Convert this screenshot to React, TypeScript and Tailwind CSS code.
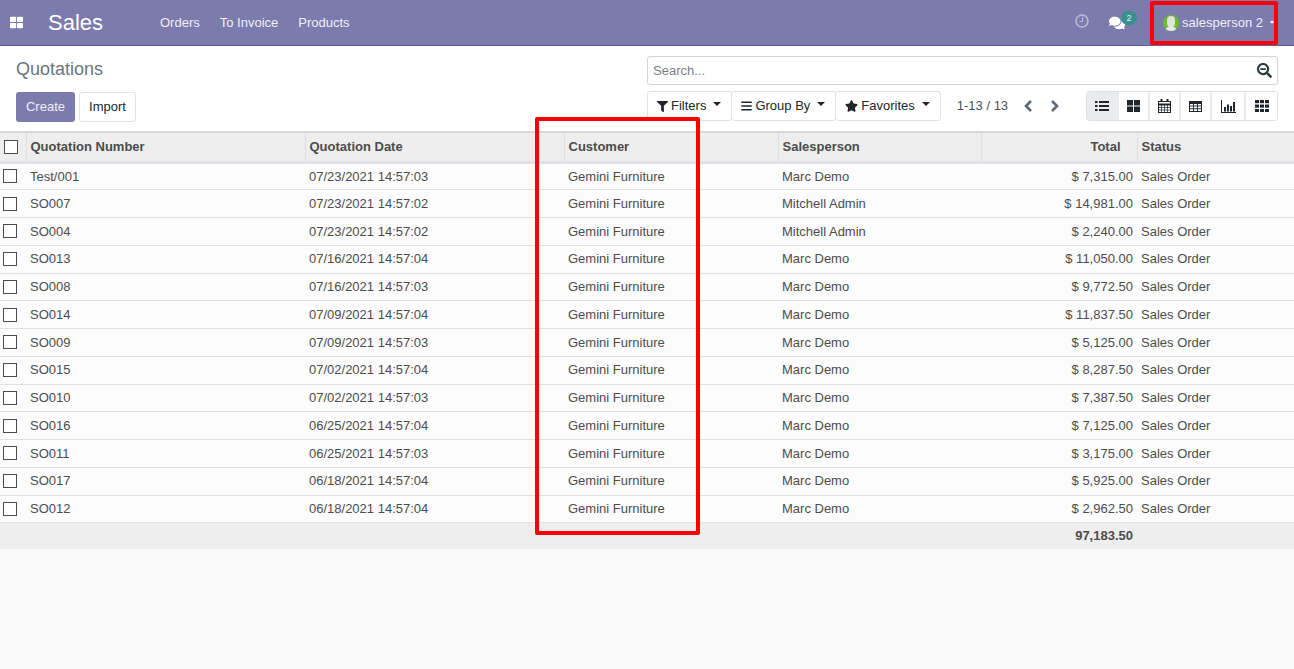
import { FaBars, FaComments, FaFilter, FaSearchMinus, FaStar, FaThLarge } from "react-icons/fa"

const rows = [
  ["Test/001", "07/23/2021 14:57:03", "Marc Demo", "$ 7,315.00"],
  ["SO007", "07/23/2021 14:57:02", "Mitchell Admin", "$ 14,981.00"],
  ["SO004", "07/23/2021 14:57:02", "Mitchell Admin", "$ 2,240.00"],
  ["SO013", "07/16/2021 14:57:04", "Marc Demo", "$ 11,050.00"],
  ["SO008", "07/16/2021 14:57:03", "Marc Demo", "$ 9,772.50"],
  ["SO014", "07/09/2021 14:57:04", "Marc Demo", "$ 11,837.50"],
  ["SO009", "07/09/2021 14:57:03", "Marc Demo", "$ 5,125.00"],
  ["SO015", "07/02/2021 14:57:04", "Marc Demo", "$ 8,287.50"],
  ["SO010", "07/02/2021 14:57:03", "Marc Demo", "$ 7,387.50"],
  ["SO016", "06/25/2021 14:57:04", "Marc Demo", "$ 7,125.00"],
  ["SO011", "06/25/2021 14:57:03", "Marc Demo", "$ 3,175.00"],
  ["SO017", "06/18/2021 14:57:04", "Marc Demo", "$ 5,925.00"],
  ["SO012", "06/18/2021 14:57:04", "Marc Demo", "$ 2,962.50"],
]

function Check() {
  return <span className="block w-[14px] h-[14px] border border-[#4c4c4c] bg-white" />
}

function Caret() {
  return <span className="inline-block ml-[4px] mb-[4px] w-0 h-0 border-x-[4px] border-x-transparent border-t-[4px] border-t-[#212529]" />
}

function FilterButton({ icon, label, last }: { icon: React.ReactNode; label: string; last?: boolean }) {
  return (
    <button className={"h-[30px] pl-[9px] pr-[10px] flex items-center gap-[3px] bg-white border border-[#dee2e6] rounded-[3px] text-[13px] text-[#212529] " + (last ? "" : "-mr-px")}>
      {icon}
      {label}
      <Caret />
    </button>
  )
}

function ViewButton({ children, active, w }: { children: React.ReactNode; active?: boolean; w: string }) {
  return (
    <button className={w + " h-[28px] flex items-center justify-center border-r-2 border-[#e9ecef] last:border-r-0 text-[#212529] " + (active ? "bg-[#e9ecef]" : "bg-white")}>
      {children}
    </button>
  )
}

function ListIcon() {
  return (
    <svg width="14" height="12" viewBox="0 0 14 12" fill="currentColor">
      <rect x="0" y="1" width="2.5" height="2" />
      <rect x="4" y="1" width="10" height="2" />
      <rect x="0" y="5" width="2.5" height="2" />
      <rect x="4" y="5" width="10" height="2" />
      <rect x="0" y="9" width="2.5" height="2" />
      <rect x="4" y="9" width="10" height="2" />
    </svg>
  )
}

function KanbanIcon() {
  return (
    <svg width="13" height="12" viewBox="0 0 13 12" fill="currentColor">
      <rect x="0" y="0" width="6" height="5.5" />
      <rect x="7" y="0" width="6" height="5.5" />
      <rect x="0" y="6.5" width="6" height="5.5" />
      <rect x="7" y="6.5" width="6" height="5.5" />
    </svg>
  )
}

function CalendarIcon() {
  return (
    <svg width="13" height="14" viewBox="0 0 13 14" fill="none" stroke="currentColor">
      <rect x="0.5" y="2.5" width="12" height="11" />
      <path d="M0 5.5h13" strokeWidth="2" />
      <path d="M0.5 8.5h12M0.5 11h12M3.5 5v8.5M6.5 5v8.5M9.5 5v8.5" strokeWidth="0.7" />
      <path d="M3.5 0v3M9.5 0v3" strokeWidth="2" />
    </svg>
  )
}

function TableIcon() {
  return (
    <svg width="13" height="11" viewBox="0 0 13 11" fill="none" stroke="currentColor">
      <rect x="0.5" y="0.5" width="12" height="10" />
      <path d="M0 2h13" strokeWidth="2" />
      <path d="M0.5 5h12M0.5 7.7h12M4.5 2v8.5M8.5 2v8.5" strokeWidth="0.9" />
    </svg>
  )
}

function GraphIcon() {
  return (
    <svg width="15" height="13" viewBox="0 0 15 13" fill="currentColor">
      <path d="M0 0h1v12h15v1H0z" />
      <rect x="3" y="7" width="2" height="4.5" />
      <rect x="6" y="4.5" width="2" height="7" />
      <rect x="9" y="6" width="2" height="5.5" />
      <rect x="12" y="2" width="2" height="9.5" />
    </svg>
  )
}

function PivotIcon() {
  return (
    <svg width="14" height="12" viewBox="0 0 14 12" fill="currentColor">
      {[0, 4.5, 9].map((y) =>
        [0, 5, 10].map((x) => <rect key={x + "-" + y} x={x} y={y} width="4" height="3.2" />),
      )}
    </svg>
  )
}

function Chevron({ left }: { left?: boolean }) {
  return (
    <svg width="10" height="12" viewBox="0 0 10 12" fill="none" stroke="#5f6a75" strokeWidth="2.6">
      <path d={left ? "M8 1 3 6l5 5" : "M2 1l5 5-5 5"} />
    </svg>
  )
}

function ClockIcon() {
  return (
    <svg width="14" height="14" viewBox="0 0 14 14" fill="none" stroke="#bcbbd6">
      <circle cx="7" cy="7" r="6" strokeWidth="1.6" />
      <path d="M7.5 3v4.5H4.5" strokeWidth="1.1" />
    </svg>
  )
}

export default function App() {
  return (
    <div className="relative min-h-[669px] bg-[#f9f9f9] font-['Liberation_Sans',Arial,sans-serif] text-[13px] text-[#4c4c4c] overflow-hidden">
      {/* Navbar */}
      <header className="h-[46px] bg-[#7c7bad] border-b border-[#5f5e97] flex items-center text-white">
        <FaThLarge className="ml-[10px] w-[13px] h-[13px] -mt-px" />
        <span className="ml-[25px] text-[22px] w-[112px]">Sales</span>
        <nav className="flex gap-[20px] text-[13px] text-[#f0f0f6]">
          <span>Orders</span>
          <span>To Invoice</span>
          <span>Products</span>
        </nav>
        <div className="ml-auto flex items-center">
          <span className="-mt-[3px]"><ClockIcon /></span>
          <div className="relative ml-[20px] mr-[26px] w-[28px]">
            <FaComments className="w-[16px] h-[16px]" />
            <span className="absolute left-[12px] -top-[4px] w-[16px] h-[14px] rounded-full bg-[#39908f] text-[9px] leading-[14px] text-center text-[#e6f2f2]">2</span>
          </div>
          <div className="w-[16px] h-[16px] rounded-full bg-[#6cbb2c] overflow-hidden relative mr-[3px]">
            <span className="absolute left-[4px] top-[1px] w-[8px] h-[11px] rounded-full bg-[#dfe3dc]" />
            <span className="absolute left-[2px] top-[11px] w-[12px] h-[6px] rounded-t-full bg-[#e8ebe5]" />
          </div>
          <span className="text-[#f0f0f6]">salesperson 2</span>
          <span className="ml-[7px] mr-[20px] w-0 h-0 border-x-[2.5px] border-x-transparent border-t-[3px] border-t-white" />
        </div>
      </header>

      {/* Control panel */}
      <section className="h-[85px] bg-white flex justify-between pl-[16px] pr-[16px]">
        <div>
          <h2 className="mt-[13px] text-[18px] leading-[21px] text-[#6c757d]">Quotations</h2>
          <div className="mt-[12px] flex gap-[4px]">
            <button className="w-[59px] h-[30px] rounded-[3px] bg-[#7c7bad] text-[#f0f0f6] text-[13px]">Create</button>
            <button className="w-[57px] h-[30px] rounded-[3px] bg-white border border-[#dee2e6] text-[#212529] text-[13px]">Import</button>
          </div>
        </div>
        <div className="w-[631px] pt-[10px]">
          <div className="h-[29px] border border-[#ced4da] rounded-[3px] flex items-center justify-between pl-[5px] pr-[5px] text-[#7a7f84]">
            <span>Search...</span>
            <FaSearchMinus className="w-[15px] h-[15px] text-[#2f3b3b]" />
          </div>
          <div className="mt-[6px] flex items-center">
            <FilterButton icon={<FaFilter className="w-[11px] h-[11px]" />} label="Filters" />
            <FilterButton icon={<FaBars className="w-[11px] h-[12px]" />} label="Group By" />
            <FilterButton icon={<FaStar className="w-[13px] h-[12px]" />} label="Favorites" last />
            <span className="ml-[16px] text-[#495057]">1-13 / 13</span>
            <span className="ml-[15px]"><Chevron left /></span>
            <span className="ml-[17px]"><Chevron /></span>
            <div className="ml-auto flex border border-[#dee2e6] rounded-[3px] overflow-hidden">
              <ViewButton active w="w-[32px]"><ListIcon /></ViewButton>
              <ViewButton w="w-[31px]"><KanbanIcon /></ViewButton>
              <ViewButton w="w-[31px]"><CalendarIcon /></ViewButton>
              <ViewButton w="w-[31px]"><TableIcon /></ViewButton>
              <ViewButton w="w-[34px]"><GraphIcon /></ViewButton>
              <ViewButton w="w-[31px]"><PivotIcon /></ViewButton>
            </div>
          </div>
        </div>
      </section>

      {/* List */}
      <table className="w-[1294px] table-fixed border-collapse bg-white">
        <colgroup>
          <col className="w-[26px]" />
          <col className="w-[279px]" />
          <col className="w-[259px]" />
          <col className="w-[214px]" />
          <col className="w-[203px]" />
          <col className="w-[156px]" />
          <col className="w-[157px]" />
        </colgroup>
        <thead>
          <tr className="h-[30px] bg-[#eeeeee] border-t-2 border-b-[3px] border-t-[#d8d8d8] border-b-[#dee2e6] text-[#4c4c4c]">
            <th className="pl-[4px]"><Check /></th>
            <th className="pl-[4px] text-left border-l border-[#dfdfdf]">Quotation Number</th>
            <th className="pl-[4px] text-left border-l border-[#dfdfdf]">Quotation Date</th>
            <th className="pl-[4px] text-left border-l border-[#dfdfdf]">Customer</th>
            <th className="pl-[4px] text-left border-l border-[#dfdfdf]">Salesperson</th>
            <th className="pr-[16px] text-right border-l border-[#dfdfdf]">Total</th>
            <th className="pl-[4px] text-left border-l border-[#dfdfdf]">Status</th>
          </tr>
        </thead>
        <tbody>
          {rows.map((r) => (
            <tr key={r[0]} className="h-[27.75px] bg-[#fcfcfc] border-b border-[#dee2e6]">
              <td className="pl-[3px]"><Check /></td>
              <td className="pl-[4px]">{r[0]}</td>
              <td className="pl-[4px]">{r[1]}</td>
              <td className="pl-[4px]">Gemini Furniture</td>
              <td className="pl-[4px]">{r[2]}</td>
              <td className="pr-[4px] text-right">{r[3]}</td>
              <td className="pl-[4px]">Sales Order</td>
            </tr>
          ))}
        </tbody>
        <tfoot>
          <tr className="h-[26px] bg-[#eeeeee] font-bold">
            <td colSpan={5} />
            <td className="pr-[4px] text-right">97,183.50</td>
            <td />
          </tr>
        </tfoot>
      </table>

      {/* Red annotation boxes */}
      <div className="absolute left-[1150px] top-[1px] w-[128px] h-[44px] border-[4px] border-[#ff0000] rounded-[2px]" />
      <div className="absolute left-[535px] top-[117px] w-[165px] h-[418px] border-[4px] border-[#ff0000] rounded-[2px]" />
    </div>
  )
}
